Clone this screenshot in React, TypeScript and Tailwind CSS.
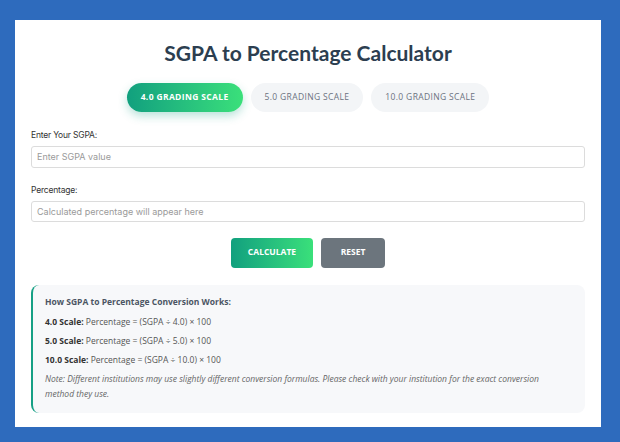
import { useState } from 'react';

const SCALES = ['4.0', '5.0', '10.0'];

export default function App() {
  const [scale, setScale] = useState('4.0');
  const [sgpa, setSgpa] = useState('');
  const [result, setResult] = useState('');

  const calculate = () => {
    const v = parseFloat(sgpa);
    if (isNaN(v)) return;
    setResult(((v / parseFloat(scale)) * 100).toFixed(2) + '%');
  };

  const reset = () => {
    setSgpa('');
    setResult('');
  };

  return (
    <div className="min-h-[442px] w-[620px] bg-[#2e6bbd] pl-[15px] pr-[19px] pt-5 pb-[15px]">
      <div className="h-[407px] bg-white px-4 pt-[18px] font-['Open_Sans',sans-serif]">
        {/* Title */}
        <h1 className="text-center font-['Lato',sans-serif] text-[21px] font-bold leading-[30px] text-[#2c3e50]">
          SGPA to Percentage Calculator
        </h1>

        {/* Scale tabs */}
        <div className="mt-[15px] flex justify-center gap-2">
          {SCALES.map((s) => (
            <button
              key={s}
              onClick={() => setScale(s)}
              className={`h-[29px] rounded-full px-[14px] text-[8.5px] uppercase tracking-[0.35px] ${
                scale === s
                  ? 'bg-gradient-to-r from-[#11a07e] to-[#3ae07a] font-bold text-white shadow-[0_4px_10px_rgba(22,160,133,0.3)]'
                  : 'bg-[#f3f5f7] font-normal text-[#6b7280]'
              }`}
            >
              {s} Grading Scale
            </button>
          ))}
        </div>

        {/* Inputs */}
        <div className="mt-[16px] font-['Inter',sans-serif]">
          <label className="block text-[8.5px] leading-[14px] tracking-[-0.2px] text-[#333]">Enter Your SGPA:</label>
          <input
            value={sgpa}
            onChange={(e) => setSgpa(e.target.value)}
            placeholder="Enter SGPA value"
            className="mt-[2px] h-[22px] w-full rounded-[3px] border border-[#dcdcdc] px-[5px] text-[9px] text-[#333] outline-none placeholder:text-[#9a9a9a]"
          />

          <label className="mt-[15px] block text-[8.5px] leading-[14px] tracking-[-0.2px] text-[#333]">Percentage:</label>
          <input
            readOnly
            value={result}
            placeholder="Calculated percentage will appear here"
            className="mt-[1px] h-[21px] w-full rounded-[3px] border border-[#dcdcdc] px-[5px] text-[9px] text-[#333] outline-none placeholder:text-[#9a9a9a]"
          />
        </div>

        {/* Actions */}
        <div className="mt-4 flex justify-center gap-2">
          <button
            onClick={calculate}
            className="h-[30px] w-[82px] rounded-[4px] bg-gradient-to-r from-[#11a07e] to-[#3ae07a] text-[8.5px] font-bold uppercase text-white"
          >
            Calculate
          </button>
          <button
            onClick={reset}
            className="h-[30px] w-[64px] rounded-[4px] bg-[#6c757d] text-[8.5px] font-bold uppercase text-white"
          >
            Reset
          </button>
        </div>

        {/* Info box */}
        <div className="mt-[17px] h-[128px] rounded-lg border-l-2 border-[#16a085] bg-[#f7f8fa] pl-3 pr-3 pt-[8px] text-[8.5px] text-[#555]">
          <p className="font-bold leading-[18px] text-[#4b5563]">How SGPA to Percentage Conversion Works:</p>
          <p className="mt-[1px] leading-[19px]">
            <strong className="text-[#333]">4.0 Scale:</strong> Percentage = (SGPA ÷ 4.0) × 100
          </p>
          <p className="leading-[19px]">
            <strong className="text-[#333]">5.0 Scale:</strong> Percentage = (SGPA ÷ 5.0) × 100
          </p>
          <p className="leading-[19px]">
            <strong className="text-[#333]">10.0 Scale:</strong> Percentage = (SGPA ÷ 10.0) × 100
          </p>
          <p className="mt-[2px] pr-2 text-[8.5px] italic leading-[15px] text-[#666]">
            Note: Different institutions may use slightly different conversion formulas. Please check with your institution for the exact conversion method they use.
          </p>
        </div>
      </div>
    </div>
  );
}
